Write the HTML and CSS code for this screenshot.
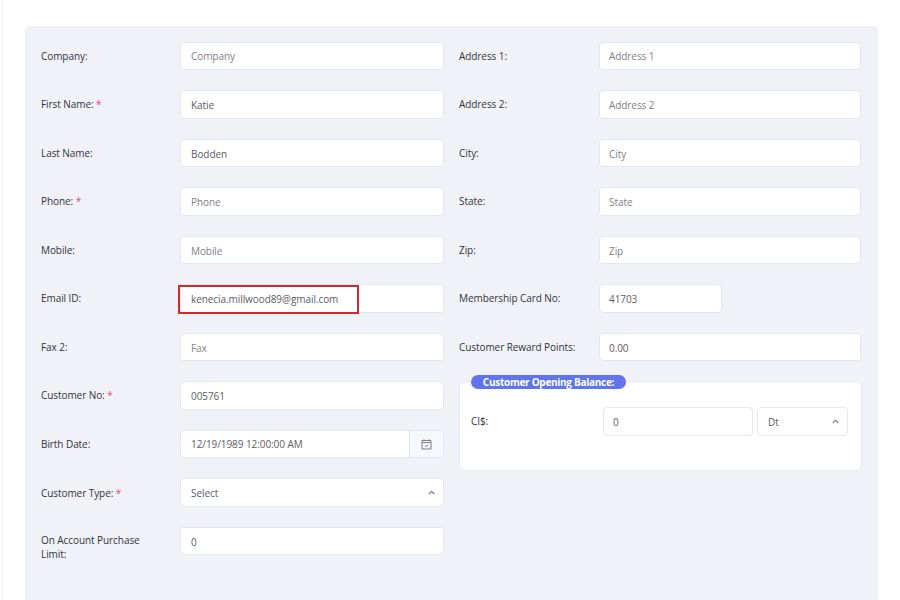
FILE: index.html
```html
<!DOCTYPE html>
<html lang="en">
<head>
<meta charset="utf-8">
<title>Customer</title>
<link rel="stylesheet" href="styles.css">
</head>
<body>
<main class="page">
  <form class="panel">
    <div class="column">
      <div class="row"><span class="label">Company:</span><div class="field placeholder">Company</div></div>
      <div class="row"><span class="label">First Name: <b class="required">*</b></span><div class="field">Katie</div></div>
      <div class="row"><span class="label">Last Name:</span><div class="field">Bodden</div></div>
      <div class="row"><span class="label">Phone: <b class="required">*</b></span><div class="field placeholder">Phone</div></div>
      <div class="row"><span class="label">Mobile:</span><div class="field placeholder">Mobile</div></div>
      <div class="row"><span class="label">Email ID:</span><div class="field marked">kenecia.millwood89@gmail.com</div></div>
      <div class="row"><span class="label">Fax 2:</span><div class="field placeholder">Fax</div></div>
      <div class="row"><span class="label">Customer No: <b class="required">*</b></span><div class="field">005761</div></div>
      <div class="row"><span class="label">Birth Date:</span>
        <div class="field date"><span class="date-value">12/19/1989 12:00:00 AM</span>
          <span class="date-button"><svg class="calendar" viewBox="0 0 11 11"><path d="M1 1.5h9V10H1zM1 3.5h9M3 .3v1.2M8 .3v1.2M3.8 6.5l1.2 1 2.2-2"/></svg></span>
        </div>
      </div>
      <div class="row"><span class="label">Customer Type: <b class="required">*</b></span>
        <div class="field select"><span>Select</span><svg class="chevron" viewBox="0 0 7 5"><path d="M.8 4 3.5 1.3 6.2 4"/></svg></div>
      </div>
      <div class="row"><span class="label wrap">On Account Purchase Limit:</span><div class="field">0</div></div>
    </div>
    <div class="column column-right">
      <div class="row"><span class="label">Address 1:</span><div class="field placeholder">Address 1</div></div>
      <div class="row"><span class="label">Address 2:</span><div class="field placeholder">Address 2</div></div>
      <div class="row"><span class="label">City:</span><div class="field placeholder">City</div></div>
      <div class="row"><span class="label">State:</span><div class="field placeholder">State</div></div>
      <div class="row"><span class="label">Zip:</span><div class="field placeholder">Zip</div></div>
      <div class="row"><span class="label">Membership Card No:</span><div class="field short">41703</div></div>
      <div class="row"><span class="label">Customer Reward Points:</span><div class="field">0.00</div></div>
      <section class="balance">
        <h2 class="balance-title">Customer Opening Balance:</h2>
        <span class="label">CI$:</span>
        <div class="field">0</div>
        <div class="field select"><span>Dt</span><svg class="chevron" viewBox="0 0 7 5"><path d="M.8 4 3.5 1.3 6.2 4"/></svg></div>
      </section>
    </div>
  </form>
</main>
</body>
</html>
```
FILE: styles.css
```css
* {
  box-sizing: border-box;
}

body {
  margin: 0;
  height: 600px;
  overflow: hidden;
  background: #fff;
  font: 10px/14px "Open Sans", sans-serif;
  letter-spacing: -0.07px;
  color: #34323e;
}

.page {
  height: 600px;
  margin-left: 2px;
  padding: 26px 22px 0 22px;
  border-left: 1px solid #f3f3f8;
}

.panel {
  display: grid;
  grid-template-columns: 403px 403px;
  column-gap: 15px;
  height: 590px;
  padding: 14.5px 15px 0;
  border: 1px solid #ededf5;
  border-radius: 5px;
  background: #f0f2f8;
}

.row {
  display: grid;
  grid-template-columns: 139px 264px;
  align-items: start;
  height: 48.55px;
}

.column-right .row {
  grid-template-columns: 140px 262px;
}

.label {
  padding-top: 7.1px;
  white-space: nowrap;
}

.wrap {
  width: 108px;
  padding-top: 6px;
  white-space: normal;
}

.required {
  color: #e8447a;
  font-weight: 400;
}

.field {
  position: relative;
  display: flex;
  align-items: center;
  height: 28.5px;
  padding: 1.4px 10px 0;
  border: 1px solid #e5e7f0;
  border-radius: 4px;
  background: #fff;
  color: #5c5c62;
}

.column-right .field {
  padding-left: 9px;
}

.field.placeholder {
  color: #7f8087;
}

.short {
  width: 123px;
}

.marked::after {
  content: "";
  box-sizing: border-box;
  position: absolute;
  top: 0;
  left: -3px;
  width: 181px;
  height: 29px;
  border: 2px solid #cf2a2c;
}

.field.date {
  padding: 0 0 0 10px;
  align-items: stretch;
}

.date-value {
  flex: 1;
  align-self: center;
}

.date-button {
  display: grid;
  place-items: center;
  width: 34px;
  border-left: 1px solid #e0e2eb;
  border-radius: 0 3px 3px 0;
  background: #f7f8fb;
}

.calendar,
.chevron {
  fill: none;
  stroke: #7c7f8b;
}

.calendar {
  width: 11px;
  height: 11px;
}

.chevron {
  width: 7px;
  height: 5px;
  stroke-width: 1.1;
}

.field.select {
  justify-content: space-between;
  padding: 0 8px 0 10px;
}

.balance {
  position: relative;
  display: grid;
  grid-template-columns: 132px 150px 91px;
  align-items: start;
  width: 403px;
  height: 90px;
  padding: 25px 0 0 11px;
  border: 1px solid #e7e9f1;
  border-radius: 6px;
  background: #fff;
}

.balance .field {
  padding-left: 9px;
}

.balance .select {
  margin-left: 4px;
  padding-left: 10px;
  width: 91px;
}

.balance-title {
  position: absolute;
  top: -7px;
  left: 11px;
  width: 155px;
  height: 14px;
  margin: 0;
  border-radius: 7px;
  background: #6074ee;
  color: #fff;
  font-size: 10px;
  font-weight: 700;
  letter-spacing: -0.28px;
  line-height: 14px;
  text-align: center;
}
```
